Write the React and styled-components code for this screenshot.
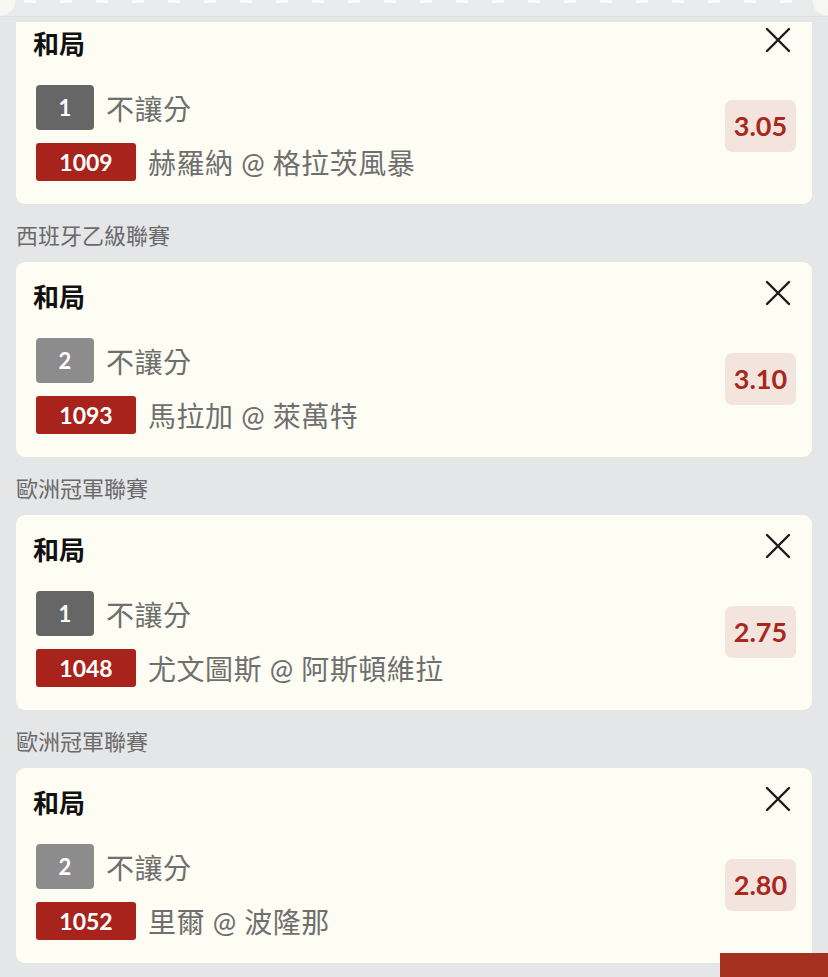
import React from "react";
import styled, { createGlobalStyle } from "styled-components";

const GlobalStyle = createGlobalStyle`
  html, body {
    margin: 0;
    padding: 0;
    background: #e5e6e8;
    font-family: Lato, "Noto Sans CJK TC", sans-serif;
  }
`;

const bets = [
  { league: null, rank: 1, no: "1009", match: "赫羅納 @ 格拉茨風暴", odds: "3.05" },
  { league: "西班牙乙級聯賽", rank: 2, no: "1093", match: "馬拉加 @ 萊萬特", odds: "3.10" },
  { league: "歐洲冠軍聯賽", rank: 1, no: "1048", match: "尤文圖斯 @ 阿斯頓維拉", odds: "2.75" },
  { league: "歐洲冠軍聯賽", rank: 2, no: "1052", match: "里爾 @ 波隆那", odds: "2.80" },
];

const CloseIcon = () => (
  <svg width="26" height="26" viewBox="0 0 26 26" fill="none">
    <path d="M2 2 L24 24 M24 2 L2 24" stroke="#1a1a1a" strokeWidth="2.4" strokeLinecap="round" />
  </svg>
);

const Slip = () => (
  <Page>
    <GlobalStyle />
    <TicketEdge />
    <List>
      {bets.map((b, i) => (
        <React.Fragment key={i}>
          {b.league && <League>{b.league}</League>}
          <Card>
            <CardHead>
              <Title>和局</Title>
              <CloseBtn>
                <CloseIcon />
              </CloseBtn>
            </CardHead>
            <CardBody>
              <Lines>
                <Line>
                  <RankBadge $rank={b.rank}>{b.rank}</RankBadge>
                  <LineText>不讓分</LineText>
                </Line>
                <Line>
                  <NoBadge>{b.no}</NoBadge>
                  <LineText>{b.match}</LineText>
                </Line>
              </Lines>
              <Odds>{b.odds}</Odds>
            </CardBody>
          </Card>
        </React.Fragment>
      ))}
    </List>
    <BottomBtn />
  </Page>
);

const Page = styled.div`
  position: relative;
  width: 828px;
  height: 977px;
  overflow: hidden;
  background: #e5e6e8;
`;

const TicketEdge = styled.div`
  position: absolute;
  top: 0;
  left: 0;
  right: 0;
  height: 22px;
  z-index: 2;
  background:
    radial-gradient(circle at 0 0, #f7f7f2 15px, transparent 16px),
    radial-gradient(circle at 100% 0, #f7f7f2 15px, transparent 16px),
    repeating-linear-gradient(to right, transparent 0 24px, #fafafa 24px 36px) 0 0 / 100% 3px no-repeat,
    linear-gradient(#e9eaeb 0 16px, #dedfe1 16px 17px, #e5e6e8 17px);
`;

const List = styled.div`
  display: flex;
  flex-direction: column;
  padding: 9px 16px 0;
`;

const League = styled.div`
  height: 58px;
  display: flex;
  align-items: center;
  padding-top: 2px;
  box-sizing: border-box;
  font-size: 22px;
  color: #6a6a6a;
  font-family: "Noto Sans CJK TC", sans-serif;
`;

const Card = styled.div`
  height: 195px;
  box-sizing: border-box;
  background: #fdfdf3;
  border-radius: 9px;
  padding: 15px 16px 0 17px;
  display: flex;
  flex-direction: column;
`;

const CardHead = styled.div`
  display: flex;
  justify-content: space-between;
  align-items: flex-start;
  height: 44px;
`;

const Title = styled.div`
  font-size: 26px;
  font-weight: 700;
  color: #111;
  line-height: 38px;
  font-family: "Noto Sans CJK TC", sans-serif;
`;

const CloseBtn = styled.div`
  margin-top: 3px;
  margin-right: 5px;
  display: flex;
`;

const CardBody = styled.div`
  display: flex;
  align-items: center;
  justify-content: space-between;
  margin-top: 17px;
  padding-left: 3px;
`;

const Lines = styled.div`
  display: flex;
  flex-direction: column;
  gap: 12px;
`;

const Line = styled.div`
  display: flex;
  align-items: center;
  gap: 12px;
`;

const RankBadge = styled.div`
  width: 58px;
  height: 45px;
  border-radius: 4px;
  background: ${(p) => (p.$rank === 1 ? "#666666" : "#8c8c8c")};
  color: #fff;
  font-size: 22px;
  font-weight: 700;
  display: flex;
  align-items: center;
  justify-content: center;
`;

const NoBadge = styled.div`
  width: 100px;
  height: 38px;
  border-radius: 3px;
  background: #a8231c;
  color: #fff;
  font-size: 23px;
  font-weight: 700;
  display: flex;
  align-items: center;
  justify-content: center;
`;

const LineText = styled.div`
  font-size: 28px;
  color: #6f6f6f;
  letter-spacing: 0.5px;
  font-family: Lato, "Noto Sans CJK TC", sans-serif;
`;

const Odds = styled.div`
  width: 71px;
  height: 52px;
  border-radius: 7px;
  background: #f3e4de;
  color: #a8281e;
  font-size: 27px;
  font-weight: 700;
  display: flex;
  align-items: center;
  justify-content: center;
  margin-top: -16px;
`;

const BottomBtn = styled.div`
  position: absolute;
  right: 0;
  bottom: 0;
  width: 108px;
  height: 24px;
  background: #a5301f;
  z-index: 3;
`;

export default Slip;
